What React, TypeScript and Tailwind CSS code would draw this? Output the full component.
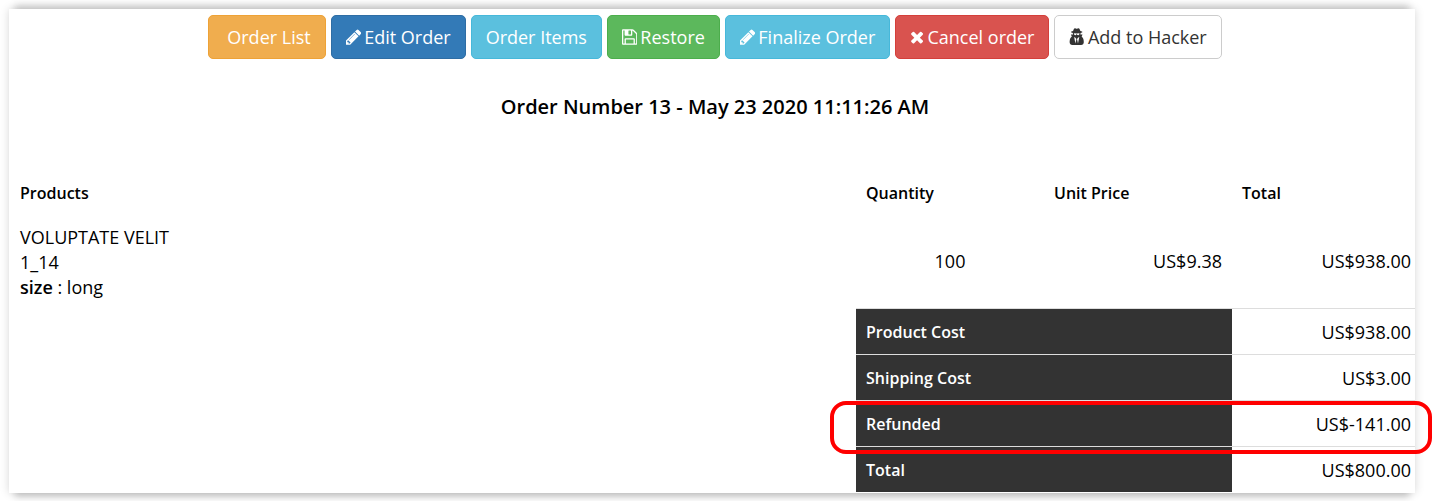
import React from 'react';
import { clsx } from 'clsx';

type IconName = 'pencil' | 'save' | 'times' | 'secret';

const ICONS: Record<IconName, { box: string; d: string }> = {
  pencil: {
    box: '128 0 1536 1792',
    d: 'M491 1536l91-91-235-235-91 91v107h128v128h107zm523-928q0-22-22-22-10 0-17 7l-542 542q-7 7-7 17 0 22 22 22 10 0 17-7l542-542q7-7 7-17zm-54-192l416 416-832 832h-416v-416zm683 96q0 53-37 90l-166 166-416-416 166-165q36-38 90-38 53 0 91 38l235 234q37 39 37 91z',
  },
  save: {
    box: '128 0 1536 1792',
    d: 'M512 1536h768v-384h-768v384zm896 0h128v-896q0-14-10-38.5t-20-34.5l-281-281q-10-10-34-20t-39-10v416q0 40-28 68t-68 28h-576q-40 0-68-28t-28-68v-416h-128v1280h128v-416q0-40 28-68t68-28h832q40 0 68 28t28 68v416zm-384-928v-320q0-13-9.5-22.5t-22.5-9.5h-192q-13 0-22.5 9.5t-9.5 22.5v320q0 13 9.5 22.5t22.5 9.5h192q13 0 22.5-9.5t9.5-22.5zm640 32v928q0 40-28 68t-68 28h-1344q-40 0-68-28t-28-68v-1344q0-40 28-68t68-28h928q40 0 88 20t76 48l280 280q28 28 48 76t20 88z',
  },
  times: {
    box: '192 0 1408 1792',
    d: 'M1490 1322q0 40-28 68l-136 136q-28 28-68 28t-68-28l-294-294-294 294q-28 28-68 28t-68-28l-136-136q-28-28-28-68t28-68l294-294-294-294q-28-28-28-68t28-68l136-136q28-28 68-28t68 28l294 294 294-294q28-28 68-28t68 28l136 136q28 28 28 68t-28 68l-294 294 294 294q28 28 28 68z',
  },
  secret: {
    box: '64 0 1536 1792',
    d: 'M704 1536l96-448-96-128-128-64zm256 0l128-640-128 64-96 128zm160-992q-2-4-4-6-10-8-96-8-70 0-167 19-7 2-21 2t-21-2q-97-19-167-19-86 0-96 8-2 2-4 6 2 18 4 27 2 3 7.5 6.5t7.5 10.5q2 4 7.5 20.5t7 20.5 7.5 17 8.5 17 9 14 12 13.5 14 9.5 17.5 8 20.5 4 24.5 2q36 0 59-12.5t32.5-30 14.5-34.5 11.5-29.5 17.5-12.5h12q11 0 17.5 12.5t11.5 29.5 14.5 34.5 32.5 30 59 12.5q13 0 24.5-2t20.5-4 17.5-8 14-9.5 12-13.5 9-14 8.5-17 7.5-17 7-20.5 7.5-20.5q2-7 7.5-10.5t7.5-6.5q2-9 4-27zm416 879q0 121-73 190t-194 69h-874q-121 0-194-69t-73-190q0-61 4.5-118t19-125.5 37.5-123.5 63.5-103.5 93.5-74.5l-90-220h214q-22-64-22-128 0-12 2-32-194-40-194-96 0-57 210-99 17-62 51.5-134t70.5-114q32-37 76-37 30 0 84 31t84 31 84-31 84-31q44 0 76 37 36 42 70.5 114t51.5 134q210 42 210 99 0 56-194 96 7 81-20 160h214l-82 225q63 33 107.5 96.5t65.5 143.5 29 151.5 8 148.5z',
  },
};

function Icon({ name }: { name: IconName }) {
  return (
    <svg viewBox={ICONS[name].box} className="h-[18px] w-auto shrink-0 fill-current" aria-hidden="true">
      <path d={ICONS[name].d} />
    </svg>
  );
}

const TONES = {
  warning: 'bg-[#f0ad4e] border-[#eea236] text-white',
  primary: 'bg-[#337ab7] border-[#2e6da4] text-white',
  info: 'bg-[#5bc0de] border-[#46b8da] text-white',
  success: 'bg-[#5cb85c] border-[#4cae4c] text-white',
  danger: 'bg-[#d9534f] border-[#d43f3a] text-white',
  plain: 'bg-white border-[#cccccc] text-[#333333]',
};

type Action = { label: string; tone: keyof typeof TONES; icon?: IconName; indent?: boolean };

const ACTIONS: Action[] = [
  { label: 'Order List', tone: 'warning', indent: true },
  { label: 'Edit Order', tone: 'primary', icon: 'pencil' },
  { label: 'Order Items', tone: 'info' },
  { label: 'Restore', tone: 'success', icon: 'save' },
  { label: 'Finalize Order', tone: 'info', icon: 'pencil' },
  { label: 'Cancel order', tone: 'danger', icon: 'times' },
  { label: 'Add to Hacker', tone: 'plain', icon: 'secret' },
];

const TOTALS = [
  { label: 'Product Cost', amount: 'US$938.00' },
  { label: 'Shipping Cost', amount: 'US$3.00' },
  { label: 'Refunded', amount: 'US$-141.00' },
  { label: 'Total', amount: 'US$800.00' },
];

function ActionButton({ label, tone, icon, indent }: Action) {
  return (
    <button
      type="button"
      className={clsx(
        'flex h-11 items-center gap-[3px] rounded-[5px] border pr-3.5 text-lg',
        indent ? 'pl-[18px]' : 'pl-3.5',
        TONES[tone],
      )}
    >
      {icon && <Icon name={icon} />}
      {label}
    </button>
  );
}

export default function App() {
  return (
    <main className="bg-white pt-[9px] pr-[18px] pb-2 pl-[9px] font-['Open_Sans',sans-serif] text-black">
      <div className="relative bg-white shadow-[0_0_9px_rgba(0,0,0,0.16),0_-10px_7px_-6px_rgba(0,0,0,0.16),0_10px_7px_-6px_rgba(0,0,0,0.18)]">
        {/* the order is a little wider than its frame, which cuts its right edge */}
        <div className="overflow-hidden bg-white">
          <div className="-mr-1.5 pt-1.5">
            <div className="flex flex-wrap justify-center gap-[5px]">
              {ACTIONS.map((action) => (
                <ActionButton key={action.label} {...action} />
              ))}
            </div>

            <h1 className="mt-9 text-center text-xl leading-6 font-semibold">
              Order Number 13 - May 23 2020 11:11:26 AM
            </h1>

            <table className="mt-[51px] mb-px w-full table-fixed text-lg leading-[25px]">
              <colgroup>
                <col />
                <col className="w-[188px]" />
                <col className="w-[188px]" />
                <col className="w-[189px]" />
              </colgroup>
              <thead>
                <tr className="h-[46px] text-left text-base">
                  <th scope="col" className="px-[11px] font-semibold">Products</th>
                  <th scope="col" className="px-[10px] font-semibold">Quantity</th>
                  <th scope="col" className="px-[10px] font-semibold">Unit Price</th>
                  <th scope="col" className="px-[10px] font-semibold">Total</th>
                </tr>
              </thead>
              <tbody>
                <tr className="h-[92px]">
                  <td className="px-[11px]">
                    VOLUPTATE VELIT
                    <br />
                    1_14
                    <br />
                    <span className="font-semibold">size</span> : long
                  </td>
                  <td className="px-[10px] text-center">100</td>
                  <td className="px-[10px] text-right">US$9.38</td>
                  <td className="px-[10px] text-right">US$938.00</td>
                </tr>
                {TOTALS.map(({ label, amount }) => (
                  <tr key={label} className="h-[46px]">
                    <td />
                    <th
                      scope="row"
                      colSpan={2}
                      className="border-t border-[#dddddd] bg-[#333333] px-[10px] pt-0.5 text-left text-base leading-[25px] font-semibold text-white"
                    >
                      {label}
                    </th>
                    <td className="border-t border-[#dddddd] px-[10px] pt-0.5 text-right">{amount}</td>
                  </tr>
                ))}
              </tbody>
            </table>
          </div>
        </div>

        {/* marker round the refund row */}
        <div className="pointer-events-none absolute -right-[17px] bottom-[39px] h-[53px] w-[602px] rounded-[16px] border-4 border-[#ff0000]" />
      </div>
    </main>
  );
}
